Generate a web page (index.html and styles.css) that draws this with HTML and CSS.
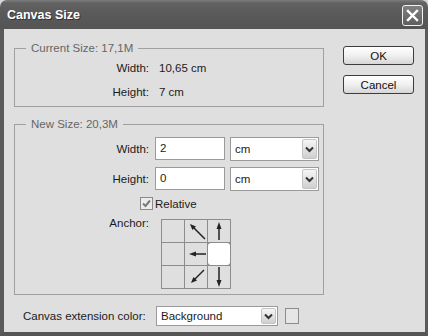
FILE: index.html
```html
<!DOCTYPE html>
<html lang="en">

<head>
    <meta charset="UTF-8">
    <title>Canvas Size</title>
    <link rel="stylesheet" href="styles.css">
</head>

<body>
    <div class="window">
        <div class="title-bar">
            <span class="title">Canvas Size</span>
            <button class="close-btn" aria-label="Close">
                <svg width="13" height="13" viewBox="0 0 13 13">
                    <path d="M2 2 L11 11 M11 2 L2 11" stroke="#fff" stroke-width="2.4" stroke-linecap="square" />
                </svg>
            </button>
        </div>
        <div class="frame">
            <div class="main-col">
                <fieldset class="group group-current">
                    <legend>Current Size: 17,1M</legend>
                    <div class="info-grid">
                        <span class="label">Width:</span>
                        <span class="value">10,65 cm</span>
                        <span class="label">Height:</span>
                        <span class="value">7 cm</span>
                    </div>
                </fieldset>

                <fieldset class="group group-new">
                    <legend>New Size: 20,3M</legend>
                    <div class="size-grid">
                        <span class="label">Width:</span>
                        <div class="field-pair">
                            <div class="text-input">2</div>
                            <div class="combo unit-combo">
                                <span>cm</span>
                                <span class="drop"><svg width="9" height="7" viewBox="0 0 9 7"><path d="M1 1.5 L4.5 5 L8 1.5" fill="none" stroke="#333" stroke-width="2" /></svg></span>
                            </div>
                        </div>

                        <span class="label">Height:</span>
                        <div class="field-pair">
                            <div class="text-input">0</div>
                            <div class="combo unit-combo">
                                <span>cm</span>
                                <span class="drop"><svg width="9" height="7" viewBox="0 0 9 7"><path d="M1 1.5 L4.5 5 L8 1.5" fill="none" stroke="#333" stroke-width="2" /></svg></span>
                            </div>
                        </div>

                        <div class="check-row">
                            <span class="checkbox">
                                <svg width="11" height="11" viewBox="0 0 11 11"><path d="M2 5.5 L4.5 8 L9 2.5" fill="none" stroke="#7a7a7a" stroke-width="2" /></svg>
                            </span>
                            <span>Relative</span>
                        </div>

                        <span class="label anchor-label">Anchor:</span>
                        <div class="anchor-grid">
                            <div class="cell"></div>
                            <div class="cell">
                                <svg width="22" height="22" viewBox="0 0 22 22"><path d="M20 19 L9 8" stroke="#222" stroke-width="1.5" /><polygon points="5,4 11,6.4 7.4,10" fill="#222" /></svg>
                            </div>
                            <div class="cell">
                                <svg width="22" height="22" viewBox="0 0 22 22"><path d="M11 20 L11 8" stroke="#222" stroke-width="1.5" /><polygon points="11,2 8.5,9 13.5,9" fill="#222" /></svg>
                            </div>
                            <div class="cell"></div>
                            <div class="cell">
                                <svg width="22" height="22" viewBox="0 0 22 22"><path d="M21 11 L10 11" stroke="#222" stroke-width="1.5" /><polygon points="4,11 11,8.5 11,13.5" fill="#222" /></svg>
                            </div>
                            <div class="cell cell-active"></div>
                            <div class="cell"></div>
                            <div class="cell">
                                <svg width="22" height="22" viewBox="0 0 22 22"><path d="M19 4 L9.5 13.5" stroke="#222" stroke-width="1.5" /><polygon points="6,17 12,14.6 8.4,11" fill="#222" /></svg>
                            </div>
                            <div class="cell">
                                <svg width="22" height="22" viewBox="0 0 22 22"><path d="M11 1 L11 15" stroke="#222" stroke-width="1.5" /><polygon points="11,21 8.5,14 13.5,14" fill="#222" /></svg>
                            </div>
                        </div>
                    </div>
                </fieldset>

                <div class="ext-row">
                    <span class="ext-label">Canvas extension color:</span>
                    <div class="combo ext-combo">
                        <span>Background</span>
                        <span class="drop"><svg width="9" height="7" viewBox="0 0 9 7"><path d="M1 1.5 L4.5 5 L8 1.5" fill="none" stroke="#333" stroke-width="2" /></svg></span>
                    </div>
                    <span class="swatch"></span>
                </div>
            </div>

            <div class="button-col">
                <button class="btn">OK</button>
                <button class="btn">Cancel</button>
            </div>
        </div>
    </div>
</body>

</html>
```

FILE: styles.css
```css
html,
body {
    margin: 0;
    padding: 0;
}

body {
    width: 428px;
    height: 336px;
    overflow: hidden;
    background: #d6d6d6;
    font-family: 'Liberation Sans', Arial, sans-serif;
    font-size: 11.5px;
    color: #1b1b1b;
}

.window {
    display: flex;
    flex-direction: column;
    height: 336px;
}

/* title bar */
.title-bar {
    flex: 0 0 29px;
    display: flex;
    align-items: center;
    justify-content: space-between;
    padding: 0 5px 0 7px;
    box-sizing: border-box;
    background: linear-gradient(#7c7c7c, #626262 3px, #5a5a5a 45%, #545454 100%);
    border-radius: 7px 7px 0 0;
}

.title {
    color: #ffffff;
    font-weight: 700;
    font-size: 12.5px;
    text-shadow: 1px 1px 0 #333;
}

.close-btn {
    width: 21px;
    height: 21px;
    margin-top: 2px;
    padding: 0;
    border: 1px solid #f2f2f2;
    border-radius: 3px;
    background: linear-gradient(#808080, #5e5e5e);
    display: flex;
    align-items: center;
    justify-content: center;
}

/* dialog body */
.frame {
    flex: 1;
    display: flex;
    background: #dfdfdf;
    border-left: 4px solid #5a5a5a;
    border-right: 3px solid #5a5a5a;
    border-bottom: 4px solid #555555;
}

.main-col {
    width: 310px;
    margin-left: 10px;
    display: flex;
    flex-direction: column;
}

.group {
    margin: 0;
    border: 1px solid #a0a0a0;
    min-width: 0;
}

.group legend {
    margin-left: 11px;
    padding: 0 5px;
    line-height: 14px;
    color: #666666;
}

.group-current {
    margin-top: 12px;
    padding: 1px 0 2px;
}

.group-new {
    margin-top: 10px;
    padding: 6px 0 5px;
}

.label {
    text-align: right;
}

.info-grid {
    display: grid;
    grid-template-columns: 134px auto;
    grid-auto-rows: 24px;
    column-gap: 6px;
    align-items: center;
}

.value {
    padding-left: 4px;
}

.size-grid {
    display: grid;
    grid-template-columns: 134px auto;
    column-gap: 6px;
    row-gap: 6px;
    align-items: center;
}

.field-pair {
    display: flex;
    align-items: flex-start;
    gap: 5px;
}

.text-input {
    width: 70px;
    height: 23px;
    box-sizing: border-box;
    padding: 0 4px;
    line-height: 21px;
    background: #ffffff;
    border: 1px solid #9a9a9a;
}

.combo {
    display: flex;
    align-items: center;
    justify-content: space-between;
    box-sizing: border-box;
    padding-left: 4px;
    background: #ffffff;
    border: 1px solid #9a9a9a;
}

.unit-combo {
    width: 89px;
    height: 24px;
}

.drop {
    width: 15px;
    height: calc(100% - 2px);
    margin: 1px;
    box-sizing: border-box;
    display: flex;
    align-items: center;
    justify-content: center;
    background: linear-gradient(#f6f6f6, #cfcfcf);
    border: 1px solid #c4c4c4;
    border-radius: 2px;
}

.check-row {
    grid-column: 1 / -1;
    display: flex;
    align-items: center;
    gap: 2px;
    padding-left: 125px;
    height: 13px;
}

.checkbox {
    width: 13px;
    height: 13px;
    box-sizing: border-box;
    border: 1px solid #8a8a8a;
    background: #ececec;
    display: flex;
    align-items: center;
    justify-content: center;
}

.anchor-label {
    align-self: start;
    line-height: 14px;
}

.anchor-grid {
    display: grid;
    grid-template-columns: repeat(3, 22px);
    grid-template-rows: repeat(3, 22px);
    gap: 1px;
    padding: 1px;
    width: max-content;
    margin: 3px 0 0 6px;
    background: #8c8c8c;
}

.cell {
    background: #dfdfdf;
    display: flex;
}

.cell-active {
    background: #ffffff;
    border-radius: 3px;
}

/* bottom row */
.ext-row {
    display: flex;
    align-items: center;
    margin-top: 11px;
    padding-left: 9px;
}

.ext-label {
    width: 133px;
}

.ext-combo {
    width: 122px;
    height: 20px;
}

.swatch {
    width: 14px;
    height: 16px;
    margin-left: 7px;
    box-sizing: border-box;
    border: 1px solid #8c8c8c;
    background: #e6e6e6;
}

/* buttons */
.button-col {
    display: flex;
    flex-direction: column;
    gap: 10px;
    margin-left: 19px;
    padding-top: 17px;
}

.btn {
    width: 71px;
    height: 19px;
    padding: 0;
    font-family: inherit;
    font-size: 11.5px;
    color: #111111;
    border: 1px solid #3c3c3c;
    border-radius: 3px;
    background: linear-gradient(#ffffff, #f0f0f0 50%, #d6d6d6);
}
```
